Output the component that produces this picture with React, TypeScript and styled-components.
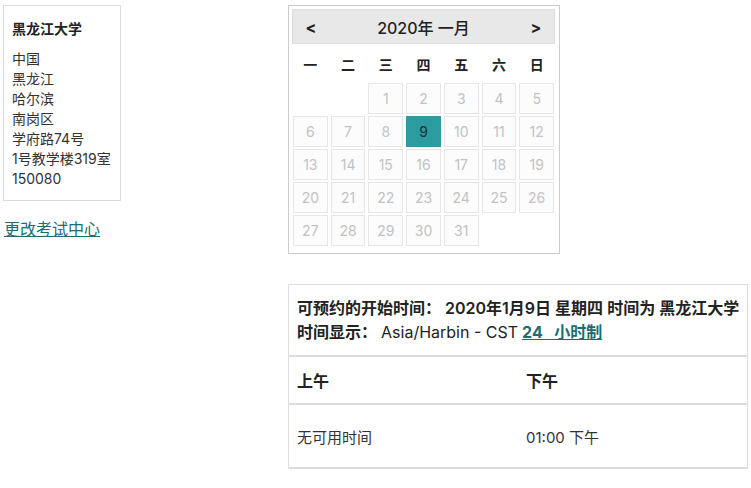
import React from 'react';
import styled, { createGlobalStyle } from 'styled-components';

const GlobalStyle = createGlobalStyle`
    body {
        margin: 0;
        background: #ffffff;
        font-family: 'Inter', 'Noto Sans CJK SC', sans-serif;
        color: #333333;
    }
`;

const WEEKDAYS = ['一', '二', '三', '四', '五', '六', '日'];
const LEADING_BLANKS = 2;
const SELECTED_DAY = 9;
const ADDRESS_LINES = ['中国', '黑龙江', '哈尔滨', '南岗区', '学府路74号', '1号教学楼319室', '150080'];

const App: React.FC = () => {
    const days: (number | null)[] = [
        ...Array.from({ length: LEADING_BLANKS }, () => null),
        ...Array.from({ length: 31 }, (_, i) => i + 1),
    ];

    return (
        <>
            <GlobalStyle />
            <Page>
                <LeftColumn>
                    <AddressCard>
                        <CenterName>黑龙江大学</CenterName>
                        {ADDRESS_LINES.map((line) => (
                            <AddressLine key={line}>{line}</AddressLine>
                        ))}
                    </AddressCard>
                    <ChangeLink href="#">更改考试中心</ChangeLink>
                </LeftColumn>
                <RightColumn>
                    <Calendar>
                        <CalendarHeader>
                            <NavButton>&lt;</NavButton>
                            <MonthTitle>2020年 一月</MonthTitle>
                            <NavButton>&gt;</NavButton>
                        </CalendarHeader>
                        <WeekdayRow>
                            {WEEKDAYS.map((d) => (
                                <Weekday key={d}>{d}</Weekday>
                            ))}
                        </WeekdayRow>
                        <DayGrid>
                            {days.map((day, i) =>
                                day === null ? (
                                    <EmptyCell key={`e${i}`} />
                                ) : (
                                    <DayCell key={day} selected={day === SELECTED_DAY}>
                                        {day}
                                    </DayCell>
                                )
                            )}
                        </DayGrid>
                    </Calendar>
                    <TimePanel>
                        <InfoSection>
                            <InfoLine>可预约的开始时间： 2020年1月9日 星期四 时间为 黑龙江大学</InfoLine>
                            <InfoLine>
                                时间显示： <Light>Asia/Harbin - CST</Light>{' '}
                                <FormatLink href="#">24&nbsp;&nbsp;&nbsp;小时制</FormatLink>
                            </InfoLine>
                        </InfoSection>
                        <SlotRow header>
                            <SlotCell>上午</SlotCell>
                            <SlotCell>下午</SlotCell>
                        </SlotRow>
                        <SlotRow>
                            <SlotCell>无可用时间</SlotCell>
                            <SlotCell>01:00 下午</SlotCell>
                        </SlotRow>
                    </TimePanel>
                </RightColumn>
            </Page>
        </>
    );
};

const Page = styled.div`
    display: flex;
    padding: 5px 0 0 3px;
`;

const LeftColumn = styled.div`
    width: 285px;
    display: flex;
    flex-direction: column;
    align-items: flex-start;
`;

const AddressCard = styled.div`
    width: 118px;
    box-sizing: border-box;
    border: 1px solid #dcdcdc;
    padding: 12px 4px 11px 8px;
`;

const CenterName = styled.div`
    font-size: 14px;
    font-weight: bold;
    line-height: 22px;
    color: #222222;
    margin-bottom: 9px;
`;

const AddressLine = styled.div`
    font-size: 14px;
    line-height: 20px;
    color: #333333;
    white-space: nowrap;
`;

const ChangeLink = styled.a`
    margin-top: 17px;
    margin-left: 1px;
    font-size: 16px;
    line-height: 22px;
    color: #1d6c70;
    text-decoration: underline;
`;

const RightColumn = styled.div`
    width: 460px;
    display: flex;
    flex-direction: column;
`;

const Calendar = styled.div`
    width: 272px;
    box-sizing: border-box;
    border: 1px solid #cccccc;
    padding: 3px 4px 7px 3px;
`;

const CalendarHeader = styled.div`
    height: 35px;
    box-sizing: border-box;
    background: #e8e8e8;
    border: 1px solid #dddddd;
    display: flex;
    align-items: center;
    justify-content: space-between;
    padding: 0 12px 0 12px;
`;

const NavButton = styled.span`
    font-size: 16px;
    font-weight: bold;
    color: #222222;
    width: 12px;
    text-align: center;
`;

const MonthTitle = styled.span`
    font-size: 16px;
    font-weight: 500;
    color: #222222;
`;

const WeekdayRow = styled.div`
    display: grid;
    grid-template-columns: repeat(7, 1fr);
    column-gap: 3px;
    padding: 0 1px;
    height: 39px;
    align-items: center;
`;

const Weekday = styled.div`
    text-align: center;
    font-size: 14px;
    font-weight: bold;
    color: #222222;
`;

const DayGrid = styled.div`
    display: grid;
    grid-template-columns: repeat(7, 1fr);
    grid-auto-rows: 31px;
    column-gap: 3px;
    row-gap: 2px;
    padding: 0 1px;
`;

const EmptyCell = styled.div``;

const DayCell = styled.div<{ selected?: boolean }>`
    box-sizing: border-box;
    display: flex;
    align-items: center;
    justify-content: center;
    font-size: 14px;
    border: 1px solid ${(p) => (p.selected ? '#2c9ca0' : '#e6e6e6')};
    background: ${(p) => (p.selected ? '#2c9ca0' : '#fcfcfc')};
    color: ${(p) => (p.selected ? '#1b2a38' : '#c2c2c2')};
`;

const TimePanel = styled.div`
    margin-top: 30px;
    width: 460px;
    box-sizing: border-box;
    border: 1px solid #dddddd;
    border-bottom-width: 2px;
`;

const InfoSection = styled.div`
    padding: 11px 8px 11px 8px;
    border-bottom: 2px solid #dddddd;
`;

const InfoLine = styled.div`
    font-size: 16px;
    line-height: 24px;
    font-weight: 600;
    color: #222222;
    white-space: nowrap;
`;

const Light = styled.span`
    font-weight: normal;
`;

const FormatLink = styled.a`
    color: #1d6c70;
    font-weight: bold;
    text-decoration: underline;
`;

const SlotRow = styled.div<{ header?: boolean }>`
    display: grid;
    grid-template-columns: 1fr 1fr;
    align-items: center;
    height: ${(p) => (p.header ? '46px' : '62px')};
    border-bottom: ${(p) => (p.header ? '2px solid #dddddd' : 'none')};
    font-size: ${(p) => (p.header ? '16px' : '15px')};
    font-weight: ${(p) => (p.header ? 'bold' : 'normal')};
    color: ${(p) => (p.header ? '#222222' : '#333333')};
`;

const SlotCell = styled.div`
    padding: 0 8px;
`;

export default App;
